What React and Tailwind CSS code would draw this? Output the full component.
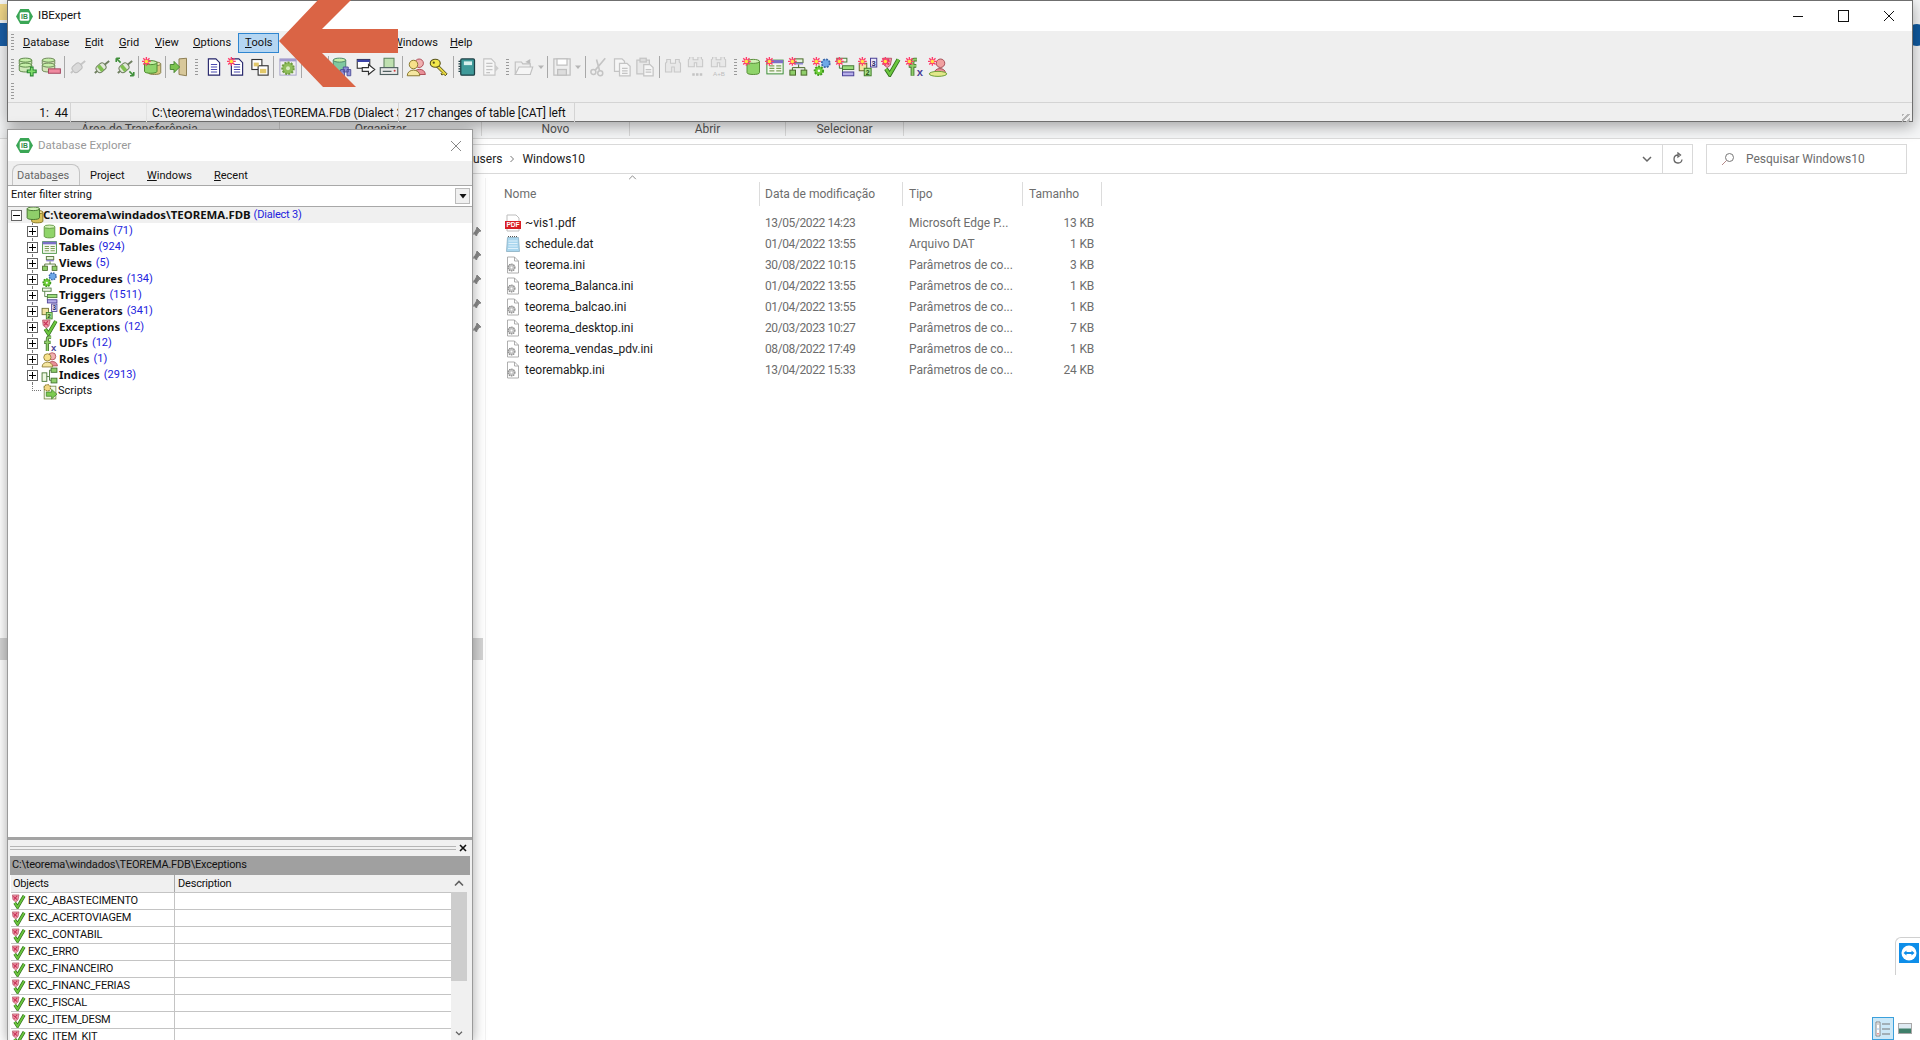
import React from "react";

const Ic = ({ className = "w-5 h-5", children }) => (
  <svg viewBox="0 0 16 16" className={"shrink-0 " + className}>{children}</svg>
);

const Star = () => (
  <g>
    <path d="M0 3.5h7M3.5 0v7M1 1l5 5M6 1l-5 5" stroke="#ff3b6b" strokeWidth="1.1" />
    <circle cx="3.5" cy="3.5" r="1.4" fill="#ffe640" />
  </g>
);

const Cyl = ({ x = 2, y = 2, w = 10, h = 11, fill = "#8fd46a", top = "#c6efa8", line = "#4f8a32" }) => (
  <g stroke={line} strokeWidth="0.8">
    <path d={`M${x} ${y + 1.5}v${h - 3}c0 2 ${w} 2 ${w} 0v-${h - 3}z`} fill={fill} />
    <ellipse cx={x + w / 2} cy={y + 1.5} rx={w / 2} ry="1.6" fill={top} />
  </g>
);

const Logo = ({ className }) => (
  <Ic className={className}>
    <path d="M4 1h8l4 7-4 7H4L0 8z" fill="#3aa655" />
    <rect x="3.5" y="4" width="9" height="8" rx="1.5" fill="#fff" />
    <text x="8" y="10.4" textAnchor="middle" fontSize="6.4" fontWeight="700" fill="#2f8a46" fontFamily="Liberation Sans, sans-serif">IB</text>
  </Ic>
);

const DbAdd = () => (
  <Ic>
    <Cyl x={1} y={1} w={10} h={6} fill="#cfe8b8" line="#5f8a4a" />
    <Cyl x={1} y={5} w={10} h={7} fill="#cfe8b8" line="#5f8a4a" />
    <path d="M11 7.5v8M7 11.5h8" stroke="#2c8a36" strokeWidth="3" />
    <path d="M11 8.5v6M8 11.5h6" stroke="#7fdc6a" strokeWidth="1.4" />
  </Ic>
);

const DbDel = () => (
  <Ic>
    <Cyl x={1} y={1} w={10} h={6} fill="#d4e4b8" line="#6f8a5a" />
    <Cyl x={1} y={5} w={10} h={7} fill="#d4e4b8" line="#6f8a5a" />
    <rect x="6" y="9.5" width="9.5" height="3.5" fill="#f08aa0" stroke="#a5455f" strokeWidth="0.8" />
  </Ic>
);

const Plug = ({ gray, arrows }) => (
  <Ic>
    <g transform="rotate(-40 8 8)">
      <rect x="3" y="5" width="8" height="6" rx="2.5" fill={gray ? "#dadada" : "#e2e8da"} stroke={gray ? "#bbb" : "#6f7f60"} strokeWidth="0.8" />
      {!gray && <rect x="5" y="5.3" width="3" height="5.4" fill="#7fc04f" />}
      <path d="M0.5 8H3M11 8h4.5" stroke={gray ? "#c6c6c6" : "#6f7f60"} strokeWidth="1.5" />
    </g>
    {arrows && <path d="M1 1l3.5 3.5M1 1v3M1 1h3M15 15l-3.5-3.5M15 15v-3M15 15h-3" stroke="#3f8f3a" strokeWidth="1.3" fill="none" />}
  </Ic>
);

const DbNew = () => (
  <Ic>
    <Cyl x={5} y={4} w={10} h={10} fill="#d6c67a" top="#eee6b0" line="#8b8350" />
    <Cyl x={2} y={3} w={10} h={10} />
    <Star />
  </Ic>
);

const Door = () => (
  <Ic>
    <path d="M8 1.5l6-0.5v14l-6-1z" fill="#d8c89a" stroke="#8f8055" strokeWidth="0.8" />
    <path d="M1 6h3V3.5L8.5 8 4 12.5V10H1z" fill="#7cc34f" stroke="#3f7f2a" strokeWidth="0.7" />
  </Ic>
);

const Doc = ({ isNew }) => (
  <Ic>
    <path d="M3.5 1.5h6l3 3v10h-9z" fill="#fff" stroke="#24246a" strokeWidth="0.9" />
    <path d="M5.5 6h5M5.5 8h5M5.5 10h5M5.5 12h5" stroke="#4a4ab0" strokeWidth="0.9" />
    {isNew && <Star />}
  </Ic>
);

const Wins = () => (
  <Ic>
    <rect x="1.5" y="2" width="8" height="8" fill="#fff" stroke="#333" strokeWidth="0.9" />
    <rect x="6.5" y="7" width="8" height="7.5" fill="#fff" stroke="#333" strokeWidth="0.9" />
    <rect x="3" y="4.5" width="4" height="3" fill="#e2c86a" />
    <rect x="8" y="9.5" width="5" height="3.5" fill="#e2c86a" />
  </Ic>
);

const GearWin = () => (
  <Ic>
    <rect x="1.5" y="1.5" width="13" height="13" fill="#eee" stroke="#aaa6cc" strokeWidth="0.8" />
    <rect x="1.5" y="1.5" width="13" height="2" fill="#a39ad0" />
    <circle cx="8" cy="9" r="4.6" fill="#8fbe5a" stroke="#6f9c42" strokeDasharray="1.6 1" strokeWidth="1.6" />
    <circle cx="8" cy="9" r="1.6" fill="#d8eac0" />
  </Ic>
);

const DbSearch = () => (
  <Ic>
    <Cyl x={1} y={1} w={10} h={10} fill="#7fc8a0" line="#4f8a6a" />
    <path d="M7 10h3v5H7zM12 10h3v5h-3zM9 8h4v4H9z" fill="#8f8fd8" stroke="#4b4b96" strokeWidth="0.7" />
  </Ic>
);

const WinArrow = () => (
  <Ic>
    <rect x="1" y="2" width="10" height="7" fill="#fff" stroke="#333" strokeWidth="0.9" />
    <rect x="1" y="2" width="10" height="2" fill="#3c44a8" />
    <path d="M5 8.5h5V6l5 4-5 4v-2.5H5z" fill="#fff" stroke="#333" strokeWidth="0.9" />
  </Ic>
);

const Printer = () => (
  <Ic>
    <rect x="4" y="1" width="8" height="8" fill="#bfe0b0" stroke="#5a7f5a" strokeWidth="0.8" />
    <rect x="1" y="8.5" width="14" height="5.5" fill="#e8e8e8" stroke="#4f5f5f" strokeWidth="0.9" />
    <path d="M3 11.5h7" stroke="#4f5f5f" />
    <circle cx="12.5" cy="11" r="0.8" fill="#d04040" />
  </Ic>
);

const Users = ({ className }) => (
  <Ic className={className}>
    <circle cx="10.5" cy="5" r="3.4" fill="#f0b0b0" stroke="#b0505a" strokeWidth="0.8" />
    <path d="M6 14c0-5 9-6 9.5 0z" fill="#e89098" stroke="#b0505a" strokeWidth="0.8" />
    <circle cx="6" cy="6" r="3.4" fill="#f7e08a" stroke="#8b7a30" strokeWidth="0.8" />
    <path d="M1 15c0-6 10-6 10 0z" fill="#f5e6a0" stroke="#8b7a30" strokeWidth="0.8" />
  </Ic>
);

const Key = () => (
  <Ic>
    <path d="M8 7l6.5 6.5-1.5 1.5-1.5-1.5-1 1-1-1 1-1L6 8z" fill="#e8d840" stroke="#59541a" strokeWidth="0.8" />
    <ellipse cx="5" cy="5" rx="4" ry="3.2" fill="#f2e84a" stroke="#59541a" strokeWidth="0.9" />
    <circle cx="3.8" cy="4.5" r="0.9" fill="#59541a" />
  </Ic>
);

const Book = () => (
  <Ic>
    <rect x="3" y="1.5" width="11" height="13" rx="1" fill="#3f9a9a" stroke="#1d3f44" strokeWidth="1" />
    <rect x="5.5" y="3.5" width="6.5" height="3" fill="#d8f0ee" />
    <path d="M2 3v10" stroke="#1d3f44" strokeWidth="1.6" strokeDasharray="1 1" />
  </Ic>
);

const DocGray = () => (
  <Ic>
    <path d="M3 1.5h6l3 3v10H3z" fill="#f6f6f6" stroke="#c4c4c4" strokeWidth="0.9" />
    <path d="M5 5h5M5 7.5h5M5 10h5M5 12.5h3" stroke="#c4c4c4" />
    <path d="M12 6l3 3-3 3z" fill="#ccc" />
  </Ic>
);

const Folder = () => (
  <Ic>
    <path d="M1 4h5l1 1.5h6V14H1z" fill="#eee" stroke="#c0c0c0" strokeWidth="0.9" />
    <path d="M1 14l3-6h11l-2 6z" fill="#f5f5f5" stroke="#c0c0c0" strokeWidth="0.9" />
    <path d="M9 4l4-2.5v4z" fill="#bbb" />
  </Ic>
);

const Caret = () => (
  <svg viewBox="0 0 8 8" className="h-2 w-2 shrink-0"><path d="M1 2.5h6L4 6z" fill="#b5b5b5" /></svg>
);

const Save = () => (
  <Ic>
    <rect x="1.5" y="1.5" width="13" height="13" fill="#eee" stroke="#c0c0c0" />
    <rect x="4" y="1.5" width="8" height="5" fill="#fff" stroke="#c0c0c0" />
    <rect x="4.5" y="10" width="7" height="4.5" fill="#ddd" stroke="#c0c0c0" />
  </Ic>
);

const Scissors = () => (
  <Ic>
    <circle cx="3.5" cy="12" r="2" fill="none" stroke="#c4c4c4" strokeWidth="1.2" />
    <circle cx="9" cy="13" r="2" fill="none" stroke="#c4c4c4" strokeWidth="1.2" />
    <path d="M5 10.5L13 1M8.5 11L6 2" stroke="#c4c4c4" strokeWidth="1.3" />
  </Ic>
);

const Copy = () => (
  <Ic>
    <path d="M2 1.5h6l2 2v8H2z" fill="#f6f6f6" stroke="#c4c4c4" />
    <path d="M6 5h6l2.5 2.5v7.5H6z" fill="#f6f6f6" stroke="#c4c4c4" />
    <path d="M8 9h4.5M8 11h4.5M8 13h4.5" stroke="#c4c4c4" />
  </Ic>
);

const Paste = () => (
  <Ic>
    <rect x="1.5" y="2.5" width="10" height="11" fill="#e8e8e8" stroke="#c4c4c4" />
    <rect x="4" y="1" width="5" height="3" fill="#ddd" stroke="#c4c4c4" />
    <path d="M7 6h5l2.5 2.5v6.5H7z" fill="#f6f6f6" stroke="#c4c4c4" />
    <path d="M8.5 10h4.5M8.5 12h4.5" stroke="#c4c4c4" />
  </Ic>
);

const Binoc = ({ tail }) => (
  <Ic>
    <path d="M3 1h3v3h4V1h3v2l1 1v7h-5V7H7v4H2V4l1-1z" fill="#e8e8e8" stroke="#c8c8c8" strokeWidth="0.9" transform={tail ? "translate(0 -1) scale(.95 .8)" : "translate(0 1)"} />
    {tail === "dots" && <path d="M5 13h2v2H5zM8 13h2v2H8zM11 13h2v2h-2z" fill="#c4c4c4" />}
    {tail === "ab" && <text x="8" y="15.5" textAnchor="middle" fontSize="5" fill="#bdbdbd" fontFamily="Liberation Sans, sans-serif">A+B</text>}
  </Ic>
);

const Domain = ({ className, isNew }) => (
  <Ic className={className}>
    <Cyl x={isNew ? 4 : 3} y={2} w={10} h={12} fill="#8fd46a" top="#d2f2b8" line="#5a8f3a" />
    {isNew && <Star />}
  </Ic>
);

const TableIc = ({ className, isNew }) => (
  <Ic className={className}>
    <rect x="1.5" y="2.5" width="13" height="11" fill="#f4f8ee" stroke="#3f8f3a" strokeWidth="0.8" />
    <rect x="1.5" y="2.5" width="13" height="2.5" fill="#7b6fc8" />
    <path d="M3.5 7h4M9 7h4M3.5 9h4M9 9h4M3.5 11h4M9 11h4" stroke="#7f9f5a" />
    {isNew && <Star />}
  </Ic>
);

const ViewIc = ({ className, isNew }) => (
  <Ic className={className}>
    <rect x="5" y="1.5" width="7" height="3" fill="#e4f4d8" stroke="#4a6a2a" strokeWidth="0.8" />
    <rect x="5" y="4.5" width="7" height="1.5" fill="#8f86d0" />
    <path d="M8.5 6v2.5M3.5 11V8.5h10V11" fill="none" stroke="#4a6a2a" strokeWidth="0.8" />
    <rect x="1.5" y="10.5" width="4.5" height="4" fill="#8fce6a" stroke="#4a6a2a" strokeWidth="0.8" />
    <rect x="10.5" y="10.5" width="4.5" height="4" fill="#8fce6a" stroke="#4a6a2a" strokeWidth="0.8" />
    {isNew && <Star />}
  </Ic>
);

const ProcIc = ({ className, isNew }) => (
  <Ic className={className}>
    <circle cx="11" cy="5" r="3.2" fill="#6ea8e8" stroke="#3a66a8" strokeDasharray="1.5 1" strokeWidth="1.4" />
    <circle cx="5.5" cy="11" r="3.4" fill="#6fcf3a" stroke="#3f9a1e" strokeDasharray="1.5 1" strokeWidth="1.5" />
    <circle cx="5.5" cy="11" r="1" fill="#fff" />
    {isNew && <Star />}
  </Ic>
);

const TrigIc = ({ className, isNew }) => (
  <Ic className={className}>
    <rect x="1.5" y="1" width="8" height="3" fill="#f0f8e8" stroke="#4a7a3a" strokeWidth="0.8" />
    <path d="M3.5 4v5h2.5" fill="none" stroke="#4a7a3a" strokeWidth="0.8" />
    <rect x="6" y="7" width="9" height="3" fill="#9adc7a" stroke="#4a7a3a" strokeWidth="0.8" />
    <path d="M6 10v2.5" stroke="#4a7a3a" strokeWidth="0.8" />
    <rect x="6" y="12" width="9" height="3" fill="#b5aee8" stroke="#4a3f96" strokeWidth="0.8" />
    {isNew && <Star />}
  </Ic>
);

const GenIc = ({ className, isNew }) => (
  <Ic className={className}>
    <rect x="10" y="1" width="5" height="7" fill="#e8e6f8" stroke="#4a3f96" strokeWidth="0.8" />
    <text x="12.5" y="7" textAnchor="middle" fontSize="6" fontWeight="700" fill="#2a2a66" fontFamily="Liberation Sans, sans-serif">3</text>
    <rect x="1" y="5" width="6" height="6" fill="#f0e2a0" stroke="#6a6a2a" strokeWidth="0.8" />
    <rect x="5" y="9" width="5.5" height="6" fill="#a8e08a" stroke="#3f7f2a" strokeWidth="0.8" />
    <text x="7.7" y="14.3" textAnchor="middle" fontSize="5.5" fontWeight="700" fill="#1f4f14" fontFamily="Liberation Sans, sans-serif">2</text>
    {isNew && <Star />}
  </Ic>
);

const ExcIc = ({ className, isNew }) => (
  <Ic className={className}>
    <path d="M1.5 1h7l-1 5.5-2.5 2-3-2.5z" fill="#ef9aa8" stroke="#b04a5e" strokeWidth="0.7" />
    <path d="M2.5 2.5l4 3.5M6.5 2L3 6" stroke="#c8325a" strokeWidth="1.2" />
    <path d="M4 9.5l3 4.5 7-12" fill="none" stroke="#2f6f1c" strokeWidth="3.4" />
    <path d="M4 9.5l3 4.5 7-12" fill="none" stroke="#6cc63f" strokeWidth="2" />
    {isNew && <Star />}
  </Ic>
);

const UdfIc = ({ className, isNew }) => (
  <Ic className={className}>
    <path d="M9.5 2H7.5C6 2 6 3 6 4.5V15M3 7h6" fill="none" stroke="#3f6f2a" strokeWidth="3" />
    <path d="M9.5 2H7.5C6 2 6 3 6 4.5V15M3.5 7h5.5" fill="none" stroke="#8fce6a" strokeWidth="1.6" />
    <text x="12" y="15.5" textAnchor="middle" fontSize="9" fontWeight="700" fill="#4a3f96" fontFamily="Liberation Sans, sans-serif">x</text>
    {isNew && <Star />}
  </Ic>
);

const RoleNew = () => (
  <Ic>
    <circle cx="10" cy="5" r="3.4" fill="#f0a0a0" stroke="#a8505a" strokeWidth="0.8" />
    <path d="M5 13c0-5 9-5 9 0z" fill="#e89098" stroke="#a8505a" strokeWidth="0.8" />
    <ellipse cx="8" cy="13.5" rx="7" ry="2" fill="#e2e88a" stroke="#6f9f3a" strokeWidth="0.8" />
    <Star />
  </Ic>
);

const IndexIc = ({ className }) => (
  <Ic className={className}>
    <rect x="1" y="5.5" width="4.5" height="8" fill="#eef8e2" stroke="#3f6f2a" strokeWidth="0.8" />
    <rect x="9.5" y="1" width="5.5" height="4" fill="#8fce6a" stroke="#3f6f2a" strokeWidth="0.8" />
    <rect x="9.5" y="10.5" width="5.5" height="4.5" fill="#8fce6a" stroke="#3f6f2a" strokeWidth="0.8" />
    <path d="M5.5 9h2.5V3h1.5M8 9v3.5h1.5" fill="none" stroke="#3f6f2a" strokeWidth="0.8" />
  </Ic>
);

const ScriptIc = ({ className }) => (
  <Ic className={className}>
    <rect x="3" y="3" width="11" height="12" fill="#f3f7e8" stroke="#7a8a4a" strokeWidth="0.8" />
    <circle cx="6" cy="4.5" r="3" fill="#f2d884" stroke="#8a7a30" strokeDasharray="1.5 .8" strokeWidth="1" />
    <path d="M5 8.5h5V6l5 4.5L10 15v-2.5H5z" fill="#7ccb50" stroke="#3f7f2a" strokeWidth="0.7" />
  </Ic>
);

const RootIc = ({ className }) => (
  <Ic className={className}>
    <Cyl x={5} y={4} w={10} h={11} fill="#d8c25a" top="#f0e49a" line="#7f7020" />
    <Cyl x={1} y={1} w={11} h={11} fill="#8fce6a" top="#d2f2b8" line="#3f6f2a" />
  </Ic>
);

const PdfIc = () => (
  <svg viewBox="0 0 18 18" className="h-[18px] w-[18px] shrink-0">
    <path d="M3 1h9l3 3v13H3z" fill="#fff" stroke="#bdbdbd" />
    <rect x="1" y="7" width="16" height="8" fill="#d81e25" />
    <text x="9" y="13.4" textAnchor="middle" fontSize="6.6" fontWeight="700" fill="#fff" fontFamily="Liberation Sans, sans-serif">PDF</text>
  </svg>
);

const DatIc = () => (
  <svg viewBox="0 0 18 18" className="h-[18px] w-[18px] shrink-0">
    <path d="M3.5 2.5h11l1 14h-13z" fill="#a9d6ee" stroke="#7fa6ba" strokeWidth="0.7" />
    <path d="M4 1.5h10" stroke="#555" strokeDasharray="1 1" />
    <path d="M4.5 6h9M4.5 8.5h9M4.5 11h9M4 13.5h10" stroke="#dff1fb" />
  </svg>
);

const IniIc = () => (
  <svg viewBox="0 0 18 18" className="h-[18px] w-[18px] shrink-0">
    <path d="M3.5 1h7l4 4v12h-11z" fill="#fff" stroke="#9a9a9a" strokeWidth="0.8" />
    <path d="M10.5 1v4h4" fill="none" stroke="#9a9a9a" strokeWidth="0.8" />
    <circle cx="7.5" cy="11.5" r="3.4" fill="#c4c4c4" stroke="#8a8a8a" strokeDasharray="1.4 .8" strokeWidth="1.2" />
    <circle cx="7.5" cy="11.5" r="1" fill="#fff" />
  </svg>
);

const Pin = () => (
  <svg viewBox="0 0 12 12" className="h-3 w-3"><path d="M7 1l4 4-2 .5-2 3-.5 1.5-3-3L5 6l1.5-3zM3.5 8.5L1 11" fill="#8a8a8a" stroke="#8a8a8a" /></svg>
);

const Grip = ({ className = "h-4" }) => (
  <span className={"w-[3px] bg-[repeating-linear-gradient(to_bottom,#9a9a9a_0_1px,transparent_1px_3px)] " + className} />
);

const Sep = () => (
  <span className="flex w-1 shrink-0 justify-center"><span className="h-[22px] w-px bg-[#a8a8a8]" /></span>
);

const Btn = ({ children, narrow }) => (
  <span className={"flex h-[22px] shrink-0 items-center justify-center " + (narrow ? "w-[10px]" : "w-[23.3px]")}>{children}</span>
);

const ToolGrip = ({ className = "w-[11px]" }) => (
  <span className={"flex shrink-0 justify-center " + className}><Grip /></span>
);

const menuItems = [
  { label: "atabase", key: "D", cls: "w-[62px]" },
  { label: "dit", key: "E", cls: "w-[34px]" },
  { label: "rid", key: "G", cls: "w-[36px]" },
  { label: "iew", key: "V", cls: "w-[38px]" },
];

const treeItems = [
  { name: "Domains", n: "(71)", Icon: Domain },
  { name: "Tables", n: "(924)", Icon: TableIc },
  { name: "Views", n: "(5)", Icon: ViewIc },
  { name: "Procedures", n: "(134)", Icon: ProcIc },
  { name: "Triggers", n: "(1511)", Icon: TrigIc },
  { name: "Generators", n: "(341)", Icon: GenIc },
  { name: "Exceptions", n: "(12)", Icon: ExcIc },
  { name: "UDFs", n: "(12)", Icon: UdfIc },
  { name: "Roles", n: "(1)", Icon: Users },
  { name: "Indices", n: "(2913)", Icon: IndexIc },
];

const files = [
  { name: "~vis1.pdf", date: "13/05/2022 14:23", type: "Microsoft Edge P...", size: "13 KB", Icon: PdfIc },
  { name: "schedule.dat", date: "01/04/2022 13:55", type: "Arquivo DAT", size: "1 KB", Icon: DatIc },
  { name: "teorema.ini", date: "30/08/2022 10:15", type: "Parâmetros de co...", size: "3 KB", Icon: IniIc },
  { name: "teorema_Balanca.ini", date: "01/04/2022 13:55", type: "Parâmetros de co...", size: "1 KB", Icon: IniIc },
  { name: "teorema_balcao.ini", date: "01/04/2022 13:55", type: "Parâmetros de co...", size: "1 KB", Icon: IniIc },
  { name: "teorema_desktop.ini", date: "20/03/2023 10:27", type: "Parâmetros de co...", size: "7 KB", Icon: IniIc },
  { name: "teorema_vendas_pdv.ini", date: "08/08/2022 17:49", type: "Parâmetros de co...", size: "1 KB", Icon: IniIc },
  { name: "teoremabkp.ini", date: "13/04/2022 15:33", type: "Parâmetros de co...", size: "24 KB", Icon: IniIc },
];

const excRows = ["EXC_ABASTECIMENTO", "EXC_ACERTOVIAGEM", "EXC_CONTABIL", "EXC_ERRO", "EXC_FINANCEIRO", "EXC_FINANC_FERIAS", "EXC_FISCAL", "EXC_ITEM_DESM", "EXC_ITEM_KIT"];

function Toolbar() {
  return (
    <div className="flex h-6 shrink-0 items-center pl-[3px]">
      <span className="flex w-[5px] shrink-0"><Grip /></span>
      <Btn><DbAdd /></Btn>
      <Btn><DbDel /></Btn>
      <Sep />
      <Btn><Plug gray /></Btn>
      <Btn><Plug /></Btn>
      <Btn><Plug arrows /></Btn>
      <Sep />
      <Btn><DbNew /></Btn>
      <Sep />
      <Btn><Door /></Btn>
      <ToolGrip />
      <Btn><Doc /></Btn>
      <Btn><Doc isNew /></Btn>
      <Btn><Wins /></Btn>
      <Sep />
      <Btn><GearWin /></Btn>
      <Sep />
      <Btn />
      <Sep />
      <Btn><DbSearch /></Btn>
      <Btn><WinArrow /></Btn>
      <Btn><Printer /></Btn>
      <Sep />
      <Btn><Users className="h-5 w-5" /></Btn>
      <Btn><Key /></Btn>
      <Sep />
      <Btn><Book /></Btn>
      <Btn><DocGray /></Btn>
      <ToolGrip />
      <Btn><Folder /></Btn>
      <Btn narrow><Caret /></Btn>
      <Sep />
      <Btn><Save /></Btn>
      <Btn narrow><Caret /></Btn>
      <Sep />
      <Btn><Scissors /></Btn>
      <Btn><Copy /></Btn>
      <Btn><Paste /></Btn>
      <Sep />
      <Btn><Binoc /></Btn>
      <Btn><Binoc tail="dots" /></Btn>
      <Btn><Binoc tail="ab" /></Btn>
      <ToolGrip className="w-[9px]" />
      <Btn><Domain isNew /></Btn>
      <Btn><TableIc isNew /></Btn>
      <Btn><ViewIc isNew /></Btn>
      <Btn><ProcIc isNew /></Btn>
      <Btn><TrigIc isNew /></Btn>
      <Btn><GenIc isNew /></Btn>
      <Btn><ExcIc isNew /></Btn>
      <Btn><UdfIc isNew /></Btn>
      <Btn><RoleNew /></Btn>
    </div>
  );
}

function MainWindow() {
  return (
    <div className="absolute left-[7px] top-0 flex h-[122px] w-[1906px] flex-col border border-[#6f6f6f] bg-[#efefef] font-['Roboto',sans-serif] text-[11px] text-[#111] shadow-[0_4px_14px_rgba(0,0,0,0.35)]">
      <div className="flex h-[30px] shrink-0 items-center bg-white pl-[8px]">
        <Logo className="h-[17px] w-[17px]" />
        <span className="ml-[5px] text-[11.5px]">IBExpert</span>
        <div className="ml-auto flex items-center pr-[4px]">
          <svg viewBox="0 0 12 12" className="mr-[34px] h-3 w-3"><path d="M1 6.5h10" stroke="#111" /></svg>
          <span className="mr-[34px] h-[12px] w-[11px] border border-[#111]" />
          <svg viewBox="0 0 12 12" className="mr-[13px] h-3 w-3"><path d="M1 1l10 10M11 1L1 11" stroke="#111" /></svg>
        </div>
      </div>
      <div className="flex h-6 shrink-0 items-center pl-[3px]">
        <span className="mr-[9px] flex w-[3px]"><Grip className="h-[18px]" /></span>
        {menuItems.map((m) => (
          <span key={m.key} className={m.cls}><u>{m.key}</u>{m.label}</span>
        ))}
        <span className="w-[45px]"><u>O</u>ptions</span>
        <span className="flex h-5 w-[41px] items-center border border-[#2f86d0] bg-[#b5d6f2] pl-[6px]"><u>T</u>ools</span>
        <span className="ml-[114px] w-[57px]"><u>W</u>indows</span>
        <span><u>H</u>elp</span>
      </div>
      <Toolbar />
      <div className="flex h-[23px] shrink-0 items-center pl-[3px]"><Grip /></div>
      <div className="flex h-5 shrink-0 items-center border-t border-[#d4d4d4] text-[12px] tracking-[-0.1px]">
        <span className="flex h-full w-[63px] items-center justify-end gap-[6px] border-r border-[#d4d4d4] pr-[2px]"><span>1:</span><span>44</span></span>
        <span className="h-full w-[76px] border-r border-[#e2e2e2]" />
        <span className="flex h-full w-[252px] items-center overflow-hidden whitespace-nowrap border-r border-[#d4d4d4] pl-[5px]">C:\teorema\windados\TEOREMA.FDB (Dialect 3)</span>
        <span className="flex h-full w-[176px] items-center border-r border-[#d4d4d4] pl-[6px]">217 changes of table [CAT] left</span>
        <span className="ml-auto mr-[2px] mt-auto h-[8px] w-[8px] bg-[repeating-linear-gradient(135deg,#b5b5b5_0_2px,transparent_2px_4px)]" />
      </div>
    </div>
  );
}

function DbExplorer() {
  return (
    <div className="absolute bottom-0 left-[7px] top-[129px] flex w-[466px] flex-col border border-b-0 border-[#9a9a9a] bg-white font-['Roboto',sans-serif] text-[11px] text-[#111] shadow-[0_2px_12px_rgba(0,0,0,0.35)]">
      <div className="flex h-[31px] shrink-0 items-center pl-[8px] pr-[9px]">
        <Logo className="h-[17px] w-[17px]" />
        <span className="ml-[5px] text-[11.5px] text-[#999]">Database Explorer</span>
        <svg viewBox="0 0 12 12" className="ml-auto mr-[1px] h-3 w-3"><path d="M1 1l10 10M11 1L1 11" stroke="#888" /></svg>
      </div>
      <div className="flex h-[24px] shrink-0 items-end bg-[#f0f0f0] pl-1">
        <span className="flex h-[21px] w-[68px] items-center rounded-t-lg border border-b-0 border-[#c4c4c4] pl-[4px] pt-[3px] text-[#666]">Databa<u>s</u>es</span>
        <span className="flex h-[21px] w-[57px] items-center pl-[10px] pt-[3px]">Pro<u>j</u>ect</span>
        <span className="flex h-[21px] w-[67px] items-center pl-[10px] pt-[3px]"><u>W</u>indows</span>
        <span className="flex h-[21px] items-center pl-[10px] pt-[3px]"><u>R</u>ecent</span>
      </div>
      <div className="flex h-[22px] shrink-0 items-center border-y border-[#a8a8a8] pl-[3px] pr-[2px]">
        <span className="mb-[2px]">Enter filter string</span>
        <span className="ml-auto flex h-[16px] w-[15px] items-center justify-center border border-[#bbb] bg-[#f0f0f0]">
          <svg viewBox="0 0 8 8" className="h-2 w-2"><path d="M0.5 2h7L4 6.5z" fill="#111" /></svg>
        </span>
      </div>
      <div className="flex-1 overflow-hidden">
        <div className="relative flex h-4 items-center bg-[#f0f0f0] pl-[3px]">
          <span className="flex h-[11px] w-[11px] items-center justify-center border border-[#666] bg-white"><span className="h-px w-[7px] bg-black" /></span>
          <RootIc className="ml-[4px] h-[18px] w-[18px]" />
          <span className="ml-[-1px] whitespace-nowrap font-['Noto_Sans',sans-serif] text-[11.4px] font-bold">C:\teorema\windados\TEOREMA.FDB</span>
          <span className="ml-[3px] tracking-[-0.2px] text-[#2222dd]">(Dialect 3)</span>
        </div>
        {treeItems.map(({ name, n, Icon }) => (
          <div key={name} className="relative flex h-4 items-center pl-[19px]">
            <span className="absolute bottom-0 left-[24px] top-0 border-l border-dotted border-[#777]" />
            <span className="relative flex h-[11px] w-[11px] items-center justify-center border border-[#666] bg-white">
              <span className="absolute h-px w-[7px] bg-black" />
              <span className="absolute h-[7px] w-px bg-black" />
            </span>
            <Icon className="ml-[3px] h-[17px] w-[17px]" />
            <span className="ml-[1px] font-['Noto_Sans',sans-serif] text-[11.4px] font-bold">{name}</span>
            <span className="ml-[4px] text-[#2222dd]">{n}</span>
          </div>
        ))}
        <div className="relative flex h-4 items-center pl-[33px]">
          <span className="absolute left-[24px] top-0 h-[8px] w-[9px] border-b border-l border-dotted border-[#777]" />
          <ScriptIc className="h-[17px] w-[17px]" />
          <span>Scripts</span>
        </div>
      </div>
      <div className="flex h-[203px] shrink-0 flex-col border-t-[3px] border-[#a3a3a3] bg-[#f0f0f0] px-[2px] tracking-[-0.2px]">
        <div className="flex h-4 shrink-0 items-center pr-[3px]">
          <span className="h-[4px] flex-1 border-y border-[#b5b5b5]" />
          <svg viewBox="0 0 8 8" className="ml-[3px] h-2 w-2"><path d="M1 1l6 6M7 1L1 7" stroke="#111" strokeWidth="1.6" /></svg>
        </div>
        <div className="flex h-[19px] shrink-0 items-center bg-[#a0a0a0] pl-[2px] text-[#111]">C:\teorema\windados\TEOREMA.FDB\Exceptions</div>
        <div className="flex min-h-0 flex-1">
          <div className="w-[441px] overflow-hidden bg-white pl-[1px]">
            <div className="flex h-[18px] border-b border-[#c4c4c4] bg-[#f0f0f0]">
              <span className="w-[164px] border-r border-[#a8a8a8] pl-[2px] pt-[1px]">Objects</span>
              <span className="pl-[3px] pt-[1px]">Description</span>
            </div>
            {excRows.map((r) => (
              <div key={r} className="flex h-[17px] border-b border-[#c4c4c4]">
                <span className="flex w-[164px] items-center gap-[2px] border-r border-[#c4c4c4]">
                  <ExcIc className="h-[15px] w-[15px]" />
                  <span className="whitespace-nowrap">{r}</span>
                </span>
              </div>
            ))}
          </div>
          <div className="flex w-[16px] flex-col">
            <svg viewBox="0 0 16 16" className="h-[17px] w-4 shrink-0"><path d="M4 10l4-4 4 4" fill="none" stroke="#606060" strokeWidth="1.6" /></svg>
            <span className="h-[89px] bg-[#cdcdcd]" />
            <svg viewBox="0 0 16 16" className="mt-auto h-[12px] w-4 shrink-0"><path d="M4 5l4 4 4-4" fill="none" stroke="#606060" strokeWidth="1.6" /></svg>
          </div>
        </div>
      </div>
    </div>
  );
}

function FileExplorer() {
  return (
    <div className="flex h-full flex-col font-['Roboto',sans-serif] text-[12px]">
      {/* ribbon behind the IBExpert window */}
      <div className="flex h-[139px] shrink-0 items-end border-b border-[#dcdcdc] bg-[#f5f6f7] pb-[2px] text-[#555]">
        <span className="h-4 w-[280px] border-r border-[#d8d8d8] text-center">Área de Transferência</span>
        <span className="h-4 w-[202px] border-r border-[#d8d8d8] text-center">Organizar</span>
        <span className="h-4 w-[148px] border-r border-[#d8d8d8] text-center">Novo</span>
        <span className="h-4 w-[156px] border-r border-[#d8d8d8] text-center">Abrir</span>
        <span className="h-4 w-[118px] border-r border-[#d8d8d8] text-center">Selecionar</span>
      </div>
      <div className="flex h-[39px] shrink-0 items-center pl-[472px] pr-[13px]">
        <div className="flex h-[30px] flex-1 items-center border border-[#d9d9d9]">
          <span className="text-[#222]">users</span>
          <svg viewBox="0 0 8 8" className="mx-[6px] h-2 w-2"><path d="M2.5 1l3 3-3 3" fill="none" stroke="#777" /></svg>
          <span className="text-[#222]">Windows10</span>
          <svg viewBox="0 0 12 12" className="ml-auto mr-[9px] h-3 w-3"><path d="M2 4l4 4 4-4" fill="none" stroke="#666" strokeWidth="1.5" /></svg>
          <span className="flex h-full w-[30px] items-center justify-center border-l border-[#d9d9d9]">
            <svg viewBox="0 0 14 14" className="h-[14px] w-[14px]"><path d="M11 7.5a4 4 0 1 1-4-4.5M7 1v4l2.5-2z" fill="none" stroke="#666" strokeWidth="1.3" /></svg>
          </span>
        </div>
        <div className="ml-[13px] flex h-[30px] w-[201px] items-center border border-[#d9d9d9] pl-[14px] text-[#6d6d6d]">
          <svg viewBox="0 0 14 14" className="mr-[11px] h-[14px] w-[14px]"><circle cx="8.5" cy="5.5" r="4" fill="none" stroke="#777" /><path d="M5.5 8.5L1 13" stroke="#b58a8a" /></svg>
          Pesquisar Windows10
        </div>
      </div>
      <div className="flex min-h-0 flex-1">
        <div className="relative w-[486px] shrink-0 border-r border-[#f2f2f2]">
          <div className="ml-[470px] flex w-3 flex-col gap-3 pt-[48px]">
            <Pin /><Pin /><Pin /><Pin /><Pin />
          </div>
          <span className="absolute left-[473px] top-[460px] h-[22px] w-[10px] bg-[#d4d4d4]" />
        </div>
        <div className="pl-[18px] pt-[4px] text-[#6d6d6d]">
          <div className="relative grid h-[24px] grid-cols-[255px_143px_120px_80px] items-center">
            <span className="relative">
              Nome
              <svg viewBox="0 0 10 6" className="absolute -top-[10px] left-[124px] h-[5px] w-[9px]"><path d="M1 5l4-4 4 4" fill="none" stroke="#777" /></svg>
            </span>
            <span className="flex h-full items-center border-l border-[#dcdcdc] pl-[5px]">Data de modificação</span>
            <span className="flex h-full items-center border-l border-[#dcdcdc] pl-[6px]">Tipo</span>
            <span className="flex h-full items-center border-x border-[#dcdcdc] pl-[6px]">Tamanho</span>
          </div>
          <div className="mt-[6px]">
            {files.map(({ name, date, type, size, Icon }) => (
              <div key={name} className="grid h-[21px] grid-cols-[255px_143px_120px_72px] items-center">
                <span className="flex items-center gap-[3px] text-[#1c1c1c]"><Icon />{name}</span>
                <span className="pl-[6px] tracking-[-0.4px]">{date}</span>
                <span className="whitespace-nowrap pl-[7px]">{type}</span>
                <span className="text-right tracking-[-0.2px]">{size}</span>
              </div>
            ))}
          </div>
        </div>
      </div>
    </div>
  );
}

export default function App() {
  return (
    <div className="relative h-[1040px] w-[1920px] overflow-hidden bg-white">
      <FileExplorer />
      {/* bits of the file explorer's title and ribbon that stick out */}
      <span className="absolute left-0 top-[4px] h-[16px] w-[7px] bg-[#f2d88a]" />
      <span className="absolute left-0 top-[23px] h-[23px] w-[7px] bg-[#1a5fa8]" />
      <span className="absolute -right-[8px] top-[24px] h-[22px] w-[22px] rounded-full bg-[#0f5aa0]" />
      <span className="absolute left-0 top-[638px] h-[22px] w-[7px] bg-[#d4d4d4]" />
      <MainWindow />
      <DbExplorer />
      {/* red arrow drawn over the shot */}
      <svg viewBox="0 0 1920 1040" className="pointer-events-none absolute left-0 top-0 h-[1040px] w-[1920px]">
        <path d="M279 41L318 0H351L322 29H398V53H322L356 87H323Z" fill="#da6445" />
      </svg>
      {/* TeamViewer tab */}
      <div className="absolute left-[1895px] top-[937px] h-[38px] w-[25px] rounded-tl-md border-l border-t border-[#d0d0d0] pl-[3px] pt-[5px]">
        <span className="flex h-5 w-5 items-center justify-center bg-[#0e8ee9]">
          <svg viewBox="0 0 16 16" className="h-4 w-4"><circle cx="8" cy="8" r="7.5" fill="#fff" /><path d="M2.5 8l3-2.5V7h5V5.5l3 2.5-3 2.5V9h-5v1.5z" fill="#0e8ee9" /></svg>
        </span>
      </div>
      <div className="absolute left-[1872px] top-[1017px] flex h-[23px] items-center gap-[4px]">
        <span className="flex h-[23px] w-[22px] items-center justify-center border border-[#3ba0dc] bg-[#cce8f7]">
          <svg viewBox="0 0 16 16" className="h-4 w-4"><path d="M1 1h4v14H1z" fill="#fff" stroke="#888" /><path d="M7 3h8M7 8h8M7 13h8" stroke="#777" strokeWidth="1.2" /><path d="M2.5 2.5h1v1h-1z" fill="#555" /><path d="M2.5 7.5h1v1h-1z" fill="#3a7fd0" /><path d="M2.5 12h1v1.5h-1z" fill="#d03a3a" /></svg>
        </span>
        <span className="h-[11px] w-[14px] border border-[#a8a8a8] bg-[linear-gradient(to_bottom,#dfeaf2_40%,#3f7f6a_60%)]" />
      </div>
    </div>
  );
}
